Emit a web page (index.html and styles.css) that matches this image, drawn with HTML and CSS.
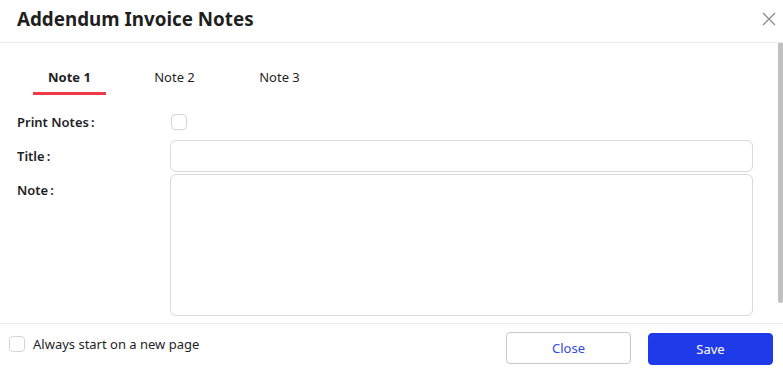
FILE: index.html
```html
<!DOCTYPE html>
<html lang="en">
<head>
<meta charset="utf-8">
<title>Addendum Invoice Notes</title>
<link rel="stylesheet" href="styles.css">
</head>
<body>
<div class="modal">
  <div class="header">
    <h1 class="title">Addendum Invoice Notes</h1>
    <button class="close-x" aria-label="Close">
      <svg width="14" height="14" viewBox="0 0 14 14"><path d="M1 1L13 13M13 1L1 13" stroke="#8a8a8a" stroke-width="1.3" fill="none"/></svg>
    </button>
  </div>
  <div class="body">
    <div class="content">
      <div class="tabs">
        <div class="tab active">Note 1</div>
        <div class="tab">Note 2</div>
        <div class="tab">Note 3</div>
      </div>
      <div class="form">
        <div class="row row-check">
          <label class="label">Print Notes<span class="colon">:</span></label>
          <span class="checkbox"></span>
        </div>
        <div class="row row-title">
          <label class="label">Title<span class="colon">:</span></label>
          <input class="input" type="text">
        </div>
        <div class="row row-note">
          <label class="label">Note<span class="colon">:</span></label>
          <textarea class="textarea"></textarea>
        </div>
      </div>
    </div>
    <div class="scrollbar"><div class="thumb"></div></div>
  </div>
  <div class="footer">
    <label class="always"><span class="checkbox"></span><span>Always start on a new page</span></label>
    <div class="actions">
      <button class="btn btn-default">Close</button>
      <button class="btn btn-primary">Save</button>
    </div>
  </div>
</div>
</body>
</html>
```
FILE: styles.css
```css
* { box-sizing: border-box; }
html, body {
  margin: 0;
  padding: 0;
  background: #fff;
  font-family: "Noto Sans", "Open Sans", sans-serif;
  color: #1f1f1f;
}
.modal {
  width: 783px;
  height: 378px;
  display: flex;
  flex-direction: column;
  overflow: hidden;
}
.header {
  height: 43px;
  flex: none;
  border-bottom: 1px solid #ececec;
  display: flex;
  align-items: center;
  justify-content: space-between;
  padding: 0 6px 0 17px;
}
.title {
  margin: 0;
  font-size: 18.8px;
  font-weight: 700;
  color: #1f1f1f;
  line-height: 24px;
  position: relative;
  top: -2px;
}
.close-x {
  border: 0;
  background: none;
  padding: 0;
  width: 16px;
  height: 16px;
  display: flex;
  align-items: center;
  justify-content: center;
  margin-top: -4px;
}
.body {
  flex: none;
  height: 280px;
  display: flex;
  overflow: hidden;
}
.content {
  flex: 1;
  padding: 15px 25px 0 0;
}
.scrollbar {
  width: 5px;
  flex: none;
}
.thumb {
  height: 260px;
  background: #c1c1c1;
  border-radius: 0 0 3px 3px;
}
.tabs {
  display: flex;
  gap: 32px;
  padding-left: 33px;
}
.tab {
  width: 73px;
  text-align: center;
  font-size: 13px;
  line-height: 20px;
  padding: 9px 0 5px;
  border-bottom: 3px solid transparent;
  color: #1f1f1f;
}
.tab.active {
  font-weight: 700;
  border-bottom-color: #f03a47;
}
.form {
  margin-top: 15px;
  padding-left: 17px;
}
.row {
  display: flex;
}
.label {
  width: 153px;
  flex: none;
  font-size: 13px;
  font-weight: 600;
  line-height: 20px;
  color: #1f1f1f;
}
.colon { margin-left: 2px; }
.row-check {
  height: 24px;
  align-items: center;
  margin-bottom: 6px;
}
.row-check .checkbox { margin-left: 1px; }
.row-title {
  align-items: center;
  margin-bottom: 2px;
}
.row-note .label { padding-top: 6px; }
.checkbox {
  display: inline-block;
  width: 16px;
  height: 16px;
  border: 1px solid #d4d4d4;
  border-radius: 4px;
  background: #fff;
  flex: none;
}
.input {
  flex: 1;
  height: 32px;
  border: 1px solid #d9d9d9;
  border-radius: 6px;
  font: inherit;
  outline: none;
}
.textarea {
  flex: 1;
  height: 142px;
  border: 1px solid #d9d9d9;
  border-radius: 6px;
  resize: none;
  font: inherit;
  outline: none;
}
.footer {
  flex: 1;
  border-top: 1px solid #ececec;
  display: flex;
  justify-content: space-between;
  align-items: flex-start;
  padding: 8px 10px 0 9px;
}
.always {
  display: flex;
  align-items: center;
  gap: 8px;
  font-size: 13px;
  color: #1f1f1f;
  margin-top: 3px;
  line-height: 18px;
}
.actions {
  display: flex;
  gap: 17px;
}
.btn {
  width: 125px;
  height: 32px;
  border-radius: 4px;
  font-family: inherit;
  font-size: 13px;
  cursor: pointer;
}
.btn-default {
  background: #fff;
  border: 1px solid #c9c9c9;
  color: #3448e6;
}
.btn-primary {
  background: #1f3ae8;
  border: 1px solid #1f3ae8;
  color: #fff;
  margin-top: 1px;
}
```
